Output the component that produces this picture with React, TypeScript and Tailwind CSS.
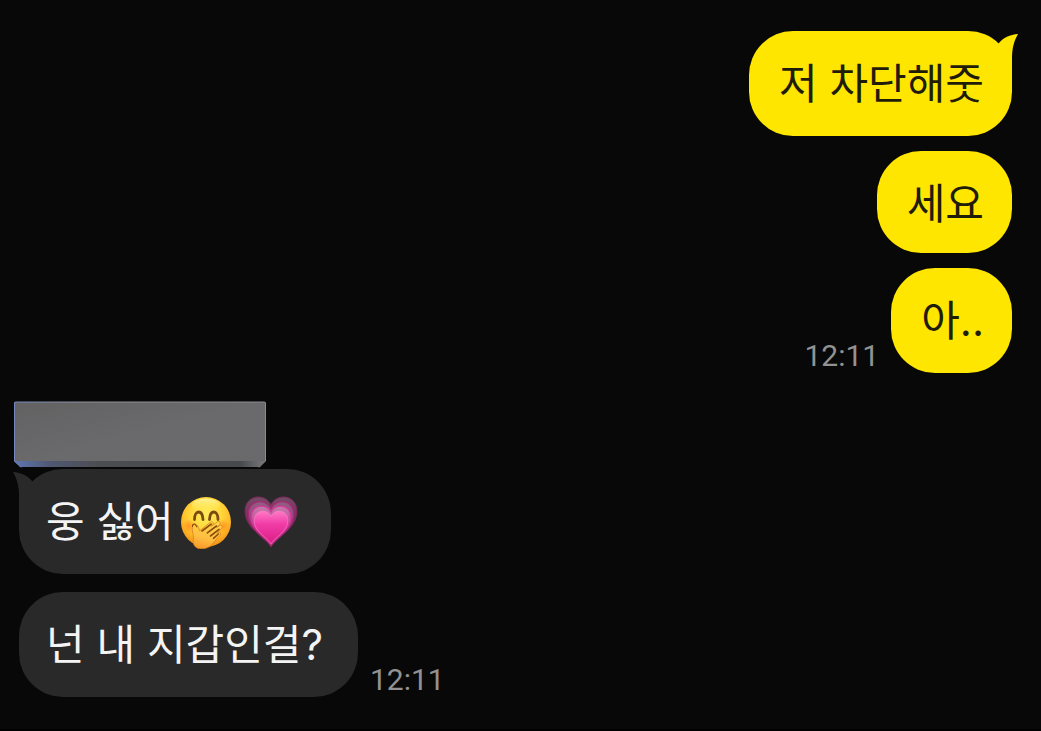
import type { ReactNode } from 'react';
import clsx from 'clsx';

type Side = 'mine' | 'theirs';

type Message = {
  id: number;
  content: ReactNode;
  time?: string;
  tail?: boolean;
  tight?: boolean;
};

function HandOverMouth() {
  return (
    <svg viewBox="0 0 52 54" className="h-[54px] w-[52px]" role="img" aria-label="🤭">
      <defs>
        <radialGradient id="face" cx="0.5" cy="0.34" r="0.66">
          <stop offset="0" stopColor="#ffec5c" />
          <stop offset="0.45" stopColor="#ffd93c" />
          <stop offset="0.75" stopColor="#ffb928" />
          <stop offset="1" stopColor="#f28d16" />
        </radialGradient>
        <linearGradient id="shine" x1="0" y1="0" x2="0" y2="1">
          <stop offset="0" stopColor="#fff8b0" stopOpacity="0.8" />
          <stop offset="1" stopColor="#fff05c" stopOpacity="0" />
        </linearGradient>
        <radialGradient id="blush">
          <stop offset="0" stopColor="#ff7a1c" stopOpacity="0.6" />
          <stop offset="1" stopColor="#ff7a1c" stopOpacity="0" />
        </radialGradient>
        <linearGradient id="hand" x1="0.6" y1="0" x2="0.3" y2="1">
          <stop offset="0" stopColor="#ffd54c" />
          <stop offset="0.6" stopColor="#ffbe42" />
          <stop offset="1" stopColor="#f79a2a" />
        </linearGradient>
      </defs>
      <circle cx="26" cy="27" r="25" fill="url(#face)" />
      <ellipse cx="26" cy="10" rx="14" ry="6.500" fill="url(#shine)" />
      <circle cx="9" cy="31" r="7" fill="url(#blush)" />
      <circle cx="43" cy="31" r="7" fill="url(#blush)" />
      <path
        d="M14.500 24.500c0-10 8-10 8.500 0M29.500 24.500c.5-10 8.500-10 8.500 0"
        fill="none"
        stroke="#7a4a10"
        strokeWidth="2.800"
        strokeLinecap="round"
      />
      <path
        d="M13.500 30c1.500-1.800 4-.3 5 2.500l1.200 3.300L30.500 27.200c1.700-1.300 3.700.5 2.400 2.200l-1.700 2 6.300-4.600c1.900-1.300 3.700.9 2.200 2.500l-3 3.200 3-1.800c1.900-1 3.300 1 1.900 2.600L37 38.300l1.500-.7c1.900-.8 3 1.100 1.600 2.500C33.500 46.500 32 53.500 22 53.800 14.500 54 12.700 49 13.300 44c.4-4-1.300-8-1.100-11 .1-1.200.6-2.200 1.300-3z"
        fill="url(#hand)"
        stroke="#d9821a"
        strokeWidth="0.8"
      />
      <path
        d="M22 36 31.200 29.200M27.300 37.800l9.200-6.800M30.500 41l8.500-6.700M33.500 43.300l4.800-4.300"
        fill="none"
        stroke="#8d4b0b"
        strokeWidth="1.600"
        strokeLinecap="round"
      />
      <path d="M12.500 31.500c-.3-2 .9-3 2.500-2.300l2 2.600" fill="none" stroke="#8d4b0b" strokeWidth="1.100" strokeLinecap="round" />
    </svg>
  );
}

const heartPath =
  'M27 52C22 43 .5 33 .5 15.500.5 6.500 6.500 1 14 1c6 0 10.500 3 13 8 2.500-5 7-8 13-8 7.500 0 13.500 5.500 13.500 14.500C53.500 33 32 43 27 52z';

function GrowingHeart() {
  return (
    <svg viewBox="0 0 54 54" className="h-[54px] w-[54px]" role="img" aria-label="💗">
      <defs>
        <linearGradient id="outer" x1="0" y1="0" x2="0" y2="1">
          <stop offset="0" stopColor="#734c67" />
          <stop offset="0.4" stopColor="#7f2c5f" />
          <stop offset="0.8" stopColor="#9c1d69" />
          <stop offset="1" stopColor="#6e2350" />
        </linearGradient>
        <linearGradient id="second" x1="0" y1="0" x2="0" y2="1">
          <stop offset="0" stopColor="#8d6080" />
          <stop offset="0.3" stopColor="#9a4a7f" />
          <stop offset="1" stopColor="#b52078" />
        </linearGradient>
        <linearGradient id="third" x1="0" y1="0" x2="0" y2="1">
          <stop offset="0" stopColor="#c280ab" />
          <stop offset="0.4" stopColor="#c8489a" />
          <stop offset="1" stopColor="#cf1d84" />
        </linearGradient>
        <linearGradient id="inner" x1="0" y1="0" x2="0" y2="1">
          <stop offset="0" stopColor="#ff79c6" />
          <stop offset="0.4" stopColor="#f03ca6" />
          <stop offset="1" stopColor="#dc1d87" />
        </linearGradient>
      </defs>
      <g transform="translate(.5 1) scale(0.98)">
        <path d={heartPath} fill="url(#outer)" stroke="#7c285b" />
      </g>
      <g transform="translate(3.800 5.800) scale(0.86)">
        <path d={heartPath} fill="url(#second)" stroke="#a82873" strokeWidth="1.600" />
      </g>
      <g transform="translate(6.800 10.300) scale(0.75)">
        <path d={heartPath} fill="url(#third)" stroke="#d5399a" strokeWidth="1.600" />
      </g>
      <g transform="translate(9.700 15.500) scale(0.64)">
        <path d={heartPath} fill="url(#inner)" stroke="#ff8fd0" strokeWidth="0.8" />
      </g>
    </svg>
  );
}

function Tail({ side }: { side: Side }) {
  return (
    <svg
      viewBox="0 0 40 44"
      aria-hidden="true"
      className={clsx(
        'absolute top-[3px] h-11 w-10',
        side === 'mine' ? '-right-1.5 text-[#ffe600]' : '-left-1.5 -scale-x-100 text-[#292929]'
      )}
    >
      <path d="M8 20 21 9C25 4 32 .5 40 0 36 7 34 14 34 24V44C33 36 30 30 24 24z" fill="currentColor" />
    </svg>
  );
}

// Bevelled plate that hides the sender's name
function HiddenName() {
  return (
    <svg viewBox="0 0 254 67" className="h-[67px] w-[254px]" role="img" aria-label="이름 가림">
      <defs>
        <linearGradient id="plate" x1="0" y1="0" x2="1" y2="1">
          <stop offset="0" stopColor="#626263" />
          <stop offset="0.5" stopColor="#6a6a6c" />
          <stop offset="1" stopColor="#69696b" />
        </linearGradient>
        <linearGradient id="edge" x1="0" y1="0" x2="1" y2="0">
          <stop offset="0" stopColor="#5f76b5" />
          <stop offset="0.15" stopColor="#4f5870" />
          <stop offset="0.35" stopColor="#4c4d51" />
          <stop offset="0.9" stopColor="#48494c" />
          <stop offset="1" stopColor="#77787c" />
        </linearGradient>
        <linearGradient id="rim" x1="0" y1="0" x2="1" y2="0">
          <stop offset="0" stopColor="#7687bd" />
          <stop offset="0.3" stopColor="#909197" />
          <stop offset="1" stopColor="#8b8c8f" />
        </linearGradient>
      </defs>
      <path d="M1 1H252V60L246 66H8L1 60z" fill="url(#plate)" />
      <path d="M1 60H252L246 66H8z" fill="url(#edge)" />
      <path d="M8 66.500 1.500 60V2Q1.500 1 2.500 1H251.500Q252.500 1 252.500 2V60L246 66.500" fill="none" stroke="url(#rim)" />
    </svg>
  );
}

const myMessages: Message[] = [
  { id: 1, content: '저 차단해줏', tail: true },
  { id: 2, content: '세요', tight: true },
  { id: 3, content: '아..', time: '12:11' },
];

const theirMessages: Message[] = [
  {
    id: 4,
    content: (
      <span className="flex items-center">
        <span>웅 싫어</span>
        <span className="-my-2 -mr-0.5 ml-1.5 flex gap-3">
          <HandOverMouth />
          <GrowingHeart />
        </span>
      </span>
    ),
    tail: true,
  },
  { id: 5, content: '넌 내 지갑인걸?', time: '12:11' },
];

function MessageRow({ message, side }: { message: Message; side: Side }) {
  const mine = side === 'mine';

  return (
    <li className={clsx('flex items-end gap-3', mine && 'flex-row-reverse')}>
      <div
        className={clsx(
          'relative rounded-[44px] pt-[30px] text-[42px] leading-[45px]',
          message.tight ? 'pb-[27px]' : 'pb-[30px]',
          mine
            ? 'bg-[#ffe600] pl-[30px] pr-7 text-[#1f1c08]'
            : 'bg-[#292929] pl-[27px] pr-[35px] text-[#f4f4f4]'
        )}
      >
        {message.tail && <Tail side={side} />}
        <div className="relative whitespace-nowrap">{message.content}</div>
      </div>
      {message.time && (
        <time className="font-[Roboto,sans-serif] text-[30px] leading-[34px] text-[#929292]">
          {message.time}
        </time>
      )}
    </li>
  );
}

export default function App() {
  return (
    <main
      lang="ko"
      className="flex min-h-screen flex-col gap-7 border-b-2 border-black bg-[#080808] pb-8 pl-[19px] pr-[29px] pt-[31px] font-['Inter','Noto_Sans_CJK_KR',sans-serif]"
    >
      <ul className="flex flex-col gap-[15px]">
        {myMessages.map((message) => (
          <MessageRow key={message.id} message={message} side="mine" />
        ))}
      </ul>

      <section>
        <div className="-ml-1.5 mb-px">
          <HiddenName />
        </div>
        <ul className="flex flex-col gap-[18px]">
          {theirMessages.map((message) => (
            <MessageRow key={message.id} message={message} side="theirs" />
          ))}
        </ul>
      </section>
    </main>
  );
}
